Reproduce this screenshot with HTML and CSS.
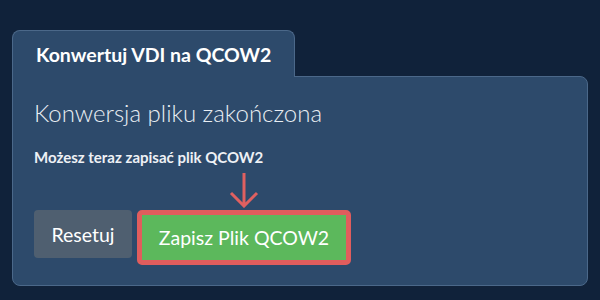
FILE: index.html
```html
<!DOCTYPE html>
<html lang="pl">
<head>
  <meta charset="UTF-8">
  <meta name="viewport" content="width=device-width, initial-scale=1.0">
  <title>Konwertuj VDI na QCOW2</title>
  <link rel="stylesheet" href="styles.css">
</head>
<body>
  <div class="card">
    <div class="tab">Konwertuj VDI na QCOW2</div>
    <div class="panel">
      <h1 class="status">Konwersja pliku zakończona</h1>
      <p class="hint">Możesz teraz zapisać plik QCOW2</p>
      <div class="actions">
        <button class="button button-reset">Resetuj</button>
        <div class="save-wrapper">
          <svg class="arrow" width="30" height="36" viewBox="0 0 30 36">
            <path d="M15 1 V34 M2 21 L15 34 L28 21" fill="none" stroke="#e06060" stroke-width="3"/>
          </svg>
          <button class="button button-save">Zapisz Plik QCOW2</button>
        </div>
      </div>
    </div>
  </div>
</body>
</html>
```

FILE: styles.css
```css
    body {
      margin: 0;
      padding: 30px 12px 14px;
      font-family: Lato, 'Open Sans', sans-serif;
      background-color: #10223a;
      color: white;
    }

    .card {
      display: flex;
      flex-direction: column;
      align-items: flex-start;
    }

    .tab {
      position: relative;
      z-index: 1;
      background-color: #2d4a6b;
      border: 1px solid #4b6889;
      border-bottom: none;
      border-radius: 8px 8px 0 0;
      padding: 12px 23px 10px 23px;
      margin-bottom: -1px;
      font-size: 19.5px;
      line-height: 24px;
      font-weight: 700;
    }

    .panel {
      align-self: stretch;
      background-color: #2d4a6b;
      border: 1px solid #4b6889;
      border-radius: 0 8px 8px 8px;
      padding: 20px 21px 20px;
    }

    .status {
      margin: 0;
      font-size: 24px;
      line-height: 32px;
      font-weight: 300;
      color: #e9eef3;
    }

    .hint {
      margin: 18px 0 0;
      font-size: 15px;
      line-height: 20px;
      font-weight: 700;
      color: #eef1f5;
    }

    .actions {
      display: flex;
      align-items: flex-start;
      gap: 5px;
      margin-top: 43px;
    }

    .button {
      font-family: inherit;
      font-size: 19.5px;
      color: white;
      border: none;
      border-radius: 4px;
      cursor: pointer;
    }

    .button-reset {
      width: 98px;
      height: 48px;
      background-color: #4f5f70;
    }

    .save-wrapper {
      position: relative;
    }

    .arrow {
      position: absolute;
      left: 50%;
      bottom: 100%;
      margin-left: -15px;
      margin-bottom: 2px;
    }

    .button-save {
      width: 214px;
      height: 55px;
      background-color: #5cb85c;
      border: 5px solid #e05d5d;
      border-radius: 5px;
    }
```
